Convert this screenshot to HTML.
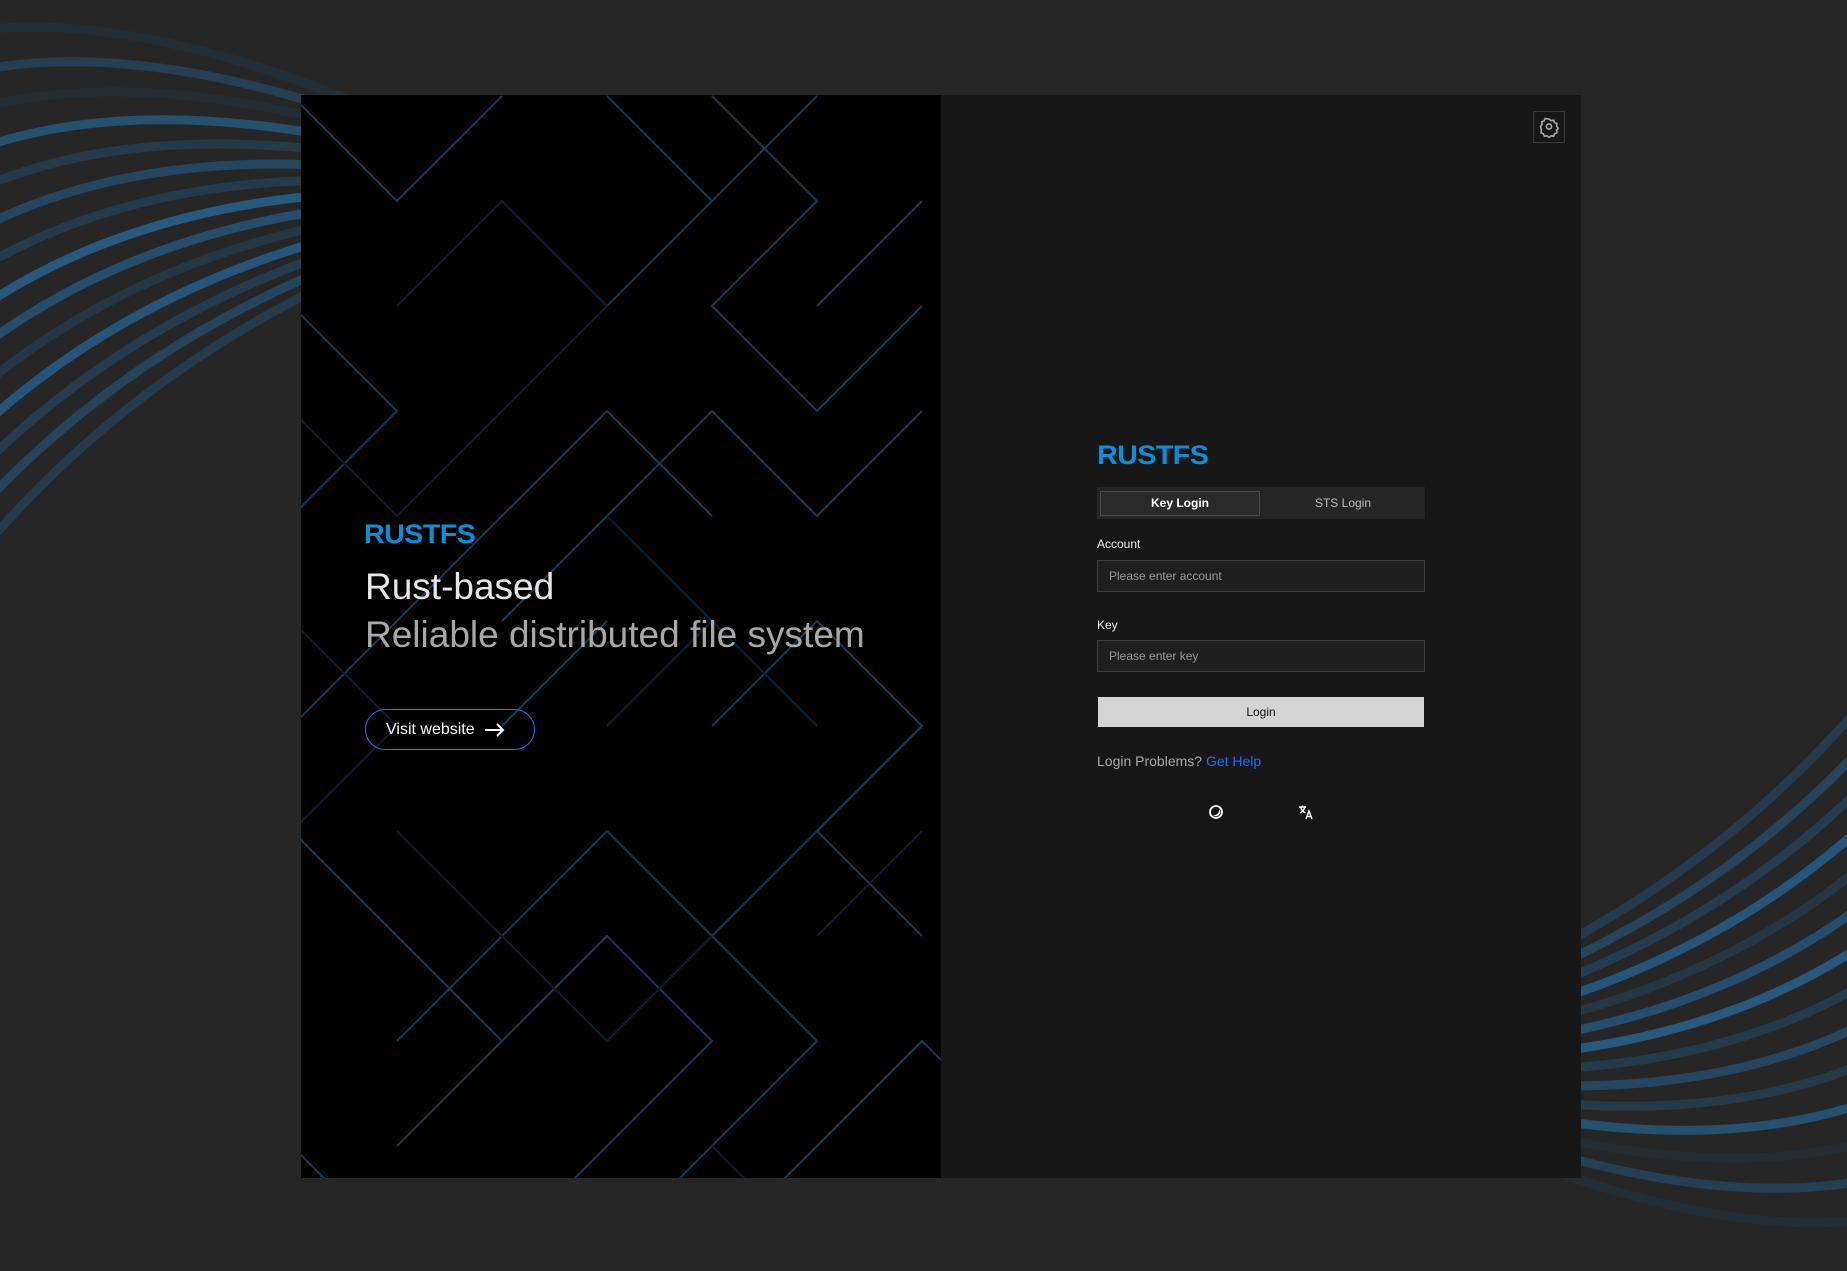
<!DOCTYPE html>
<html><head><meta charset="utf-8"><style>
*{margin:0;padding:0;box-sizing:border-box}
html,body{width:1847px;height:1271px;overflow:hidden;background:#262626;font-family:"Liberation Sans",sans-serif}
.bg{position:absolute;left:0;top:0}
.card{position:absolute;left:301px;top:95px;width:1280px;height:1083px;background:#171717}
.left{position:absolute;left:0;top:0;width:640px;height:1083px;background:#000;overflow:hidden}
.logo{font-family:"Liberation Sans",sans-serif;font-weight:bold;color:#0a8fd6;letter-spacing:-0.5px;transform-origin:left top}
.l1{position:absolute;left:63px;top:424px;font-size:27px;transform:scaleX(1.06)}
.t1{position:absolute;left:64px;top:471px;font-size:37px;color:#e6e6e6}
.t2{position:absolute;left:64px;top:519px;font-size:37px;color:#a8a8a8}
.btn{position:absolute;left:64px;top:614px;width:170px;height:41px;border:1px solid #2f6ff0;border-radius:21px;color:#fff;font-size:16px;line-height:39px;padding-left:20px}
.btn svg{position:absolute;left:118px;top:12px}
.gear{position:absolute;left:1232px;top:16px;width:32px;height:32px;border:1px solid #3a3a3a}
.form{position:absolute;left:796px;top:0;width:328px}
.l2{position:absolute;left:0;top:345px;font-size:27px;transform:scaleX(1.06)}
.tabs{position:absolute;left:0;top:392px;width:328px;height:32px;background:#262626}
.tab1{position:absolute;left:3px;top:4px;width:160px;height:25px;border:1px solid #4a4a4a;background:#2a2a2a;color:#fff;font-weight:bold;font-size:12px;text-align:center;line-height:23px}
.tab2{position:absolute;left:166px;top:4px;width:160px;height:25px;color:#bbb;font-size:12px;text-align:center;line-height:25px}
.lab{position:absolute;left:0;font-size:12px;color:#eee}
.inp{position:absolute;left:0;width:328px;height:32px;border:1px solid #3c3c3c;background:#1f1f1f;color:#999;font-size:12px;line-height:30px;padding-left:11px}
.login{position:absolute;left:1px;top:602px;width:326px;height:30px;background:#d4d4d4;color:#111;font-size:12px;text-align:center;line-height:31px}
.prob{position:absolute;left:0;top:658px;font-size:14px;color:#aaa}
.prob span{color:#1f6bff}
</style></head><body>
<svg class="bg" width="1847" height="1271">
<defs>
<g id="fan" fill="none" stroke-width="9">
<path d="M-20,30 Q200,5 560,200" stroke="#222e37"/>
<path d="M-20,70 Q200,28 560,200" stroke="#263f53"/>
<path d="M-20,108 Q200,50 560,200" stroke="#232d36"/>
<path d="M-20,148 Q200,72 560,200" stroke="#25506e"/>
<path d="M-20,188 Q200,94 560,200" stroke="#263a4a"/>
<path d="M-20,228 Q200,116 560,200" stroke="#26465f"/>
<path d="M-20,268 Q200,138 560,200" stroke="#253b4b"/>
<path d="M-20,308 Q200,160 560,200" stroke="#28587c"/>
<path d="M-20,348 Q200,182 560,200" stroke="#264d6b"/>
<path d="M-20,388 Q200,204 560,200" stroke="#253645"/>
<path d="M-20,428 Q200,226 560,200" stroke="#27557a"/>
<path d="M-20,468 Q200,248 560,200" stroke="#253c4e"/>
<path d="M-20,508 Q200,270 560,200" stroke="#26455c"/>
<path d="M-20,552 Q200,292 560,200" stroke="#253a4b"/>
</g>
</defs>
<use href="#fan"/>
<g transform="translate(1847,1250) scale(-1,-1)"><use href="#fan"/></g>
</svg>
<div class="card">
<div class="left">
<svg width="640" height="1083" style="position:absolute;left:0;top:0">
<g transform="translate(-9,1) scale(105)" fill="none" stroke-width="2">
<g stroke="#163a58">
<polyline vector-effect="non-scaling-stroke" points="0,0 1,1 2,0"/>
<polyline vector-effect="non-scaling-stroke" points="0,2 1,3 0,4"/>
<polyline vector-effect="non-scaling-stroke" points="2,1 3,2 5,0"/>
<polyline vector-effect="non-scaling-stroke" points="4,0 5,1 4,2 5,3 6,2"/>
<polyline vector-effect="non-scaling-stroke" points="3,0 4,1"/>
<polyline vector-effect="non-scaling-stroke" points="5,2 6,1"/>
<polyline vector-effect="non-scaling-stroke" points="0,6 1,5 3,3 4,4"/>
<polyline vector-effect="non-scaling-stroke" points="2,5 4,3 5,4 6,3"/>
<polyline vector-effect="non-scaling-stroke" points="0,7 2,9 3,8"/>
<polyline vector-effect="non-scaling-stroke" points="1,10 2,9 3,8 4,9 2,11"/>
<polyline vector-effect="non-scaling-stroke" points="4,6 5,5 6,6 5,7 6,8"/>
<polyline vector-effect="non-scaling-stroke" points="1,9 3,7 5,9 3,11"/>
<polyline vector-effect="non-scaling-stroke" points="5,10 6,9"/>
<polyline vector-effect="non-scaling-stroke" points="4,8 6,6"/>
<polyline vector-effect="non-scaling-stroke" points="4,11 6,9 7,10"/>
<polyline vector-effect="non-scaling-stroke" points="0,10 1,11"/>
<polyline vector-effect="non-scaling-stroke" points="2,6 3,5"/>
</g>
<g stroke="#0c1f30">
<polyline vector-effect="non-scaling-stroke" points="1,2 2,1 3,2 2,3"/>
<polyline vector-effect="non-scaling-stroke" points="0,3 1,4 2,3"/>
<polyline vector-effect="non-scaling-stroke" points="3,4 4,5 5,6"/>
<polyline vector-effect="non-scaling-stroke" points="1,7 2,8 3,9 4,8"/>
<polyline vector-effect="non-scaling-stroke" points="0,5 1,6 0,7"/>
<polyline vector-effect="non-scaling-stroke" points="3,6 4,5"/>
<polyline vector-effect="non-scaling-stroke" points="5,8 6,7"/>
<polyline vector-effect="non-scaling-stroke" points="4,10 5,11"/>
</g>
</g></svg>
<div class="logo l1">RUSTFS</div>
<div class="t1">Rust-based</div>
<div class="t2">Reliable distributed file system</div>
<div class="btn">Visit website<svg width="22" height="16" viewBox="0 0 22 16"><path d="M1 8H19M13 2L19 8L13 14" stroke="#fff" stroke-width="2" fill="none"/></svg></div>
</div>
<div class="gear"><svg width="30" height="30" viewBox="0 0 30 30"><path d="M15 7.5l2 1.6 2.6-.4 1 2.4 2.4 1-.4 2.6 1.6 2-1.6 2 .4 2.6-2.4 1-1 2.4-2.6-.4-2 1.6-2-1.6-2.6.4-1-2.4-2.4-1 .4-2.6L6.5 15l1.6-2-.4-2.6 2.4-1 1-2.4 2.6.4z" transform="translate(0,-0.5)" fill="none" stroke="#aaa" stroke-width="1.6"/><circle cx="15" cy="14.5" r="2.6" fill="none" stroke="#aaa" stroke-width="1.6"/></svg></div>
<div class="form">
<div class="logo l2">RUSTFS</div>
<div class="tabs"><div class="tab1">Key Login</div><div class="tab2">STS Login</div></div>
<div class="lab" style="top:442px">Account</div>
<div class="inp" style="top:465px">Please enter account</div>
<div class="lab" style="top:523px">Key</div>
<div class="inp" style="top:545px">Please enter key</div>
<div class="login">Login</div>
<div class="prob">Login Problems? <span>Get Help</span></div>
<svg style="position:absolute;left:111px;top:709px" width="16" height="16" viewBox="0 0 16 16"><circle cx="8" cy="8" r="6" fill="none" stroke="#fff" stroke-width="1.8"/><path d="M11 5A5 5 0 0 1 5 11A4 4 0 0 0 11 5z" fill="#fff"/></svg>
<svg style="position:absolute;left:201px;top:709px" width="16" height="16" viewBox="0 0 16 16"><path d="M1 3h7M4.5 1.5v1.5M2.5 3c1 3 3 5 5 6M7 3c-1 3-3 5-5 6M8 15l3-8 3 8M9 12.5h4" stroke="#fff" stroke-width="1.4" fill="none"/></svg>
</div>
</div>
</body></html>
